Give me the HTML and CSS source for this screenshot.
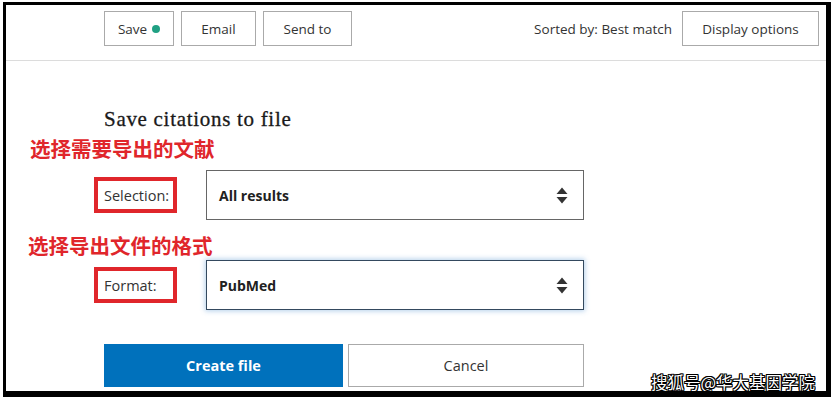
FILE: index.html
```html
<!DOCTYPE html>
<html lang="zh-CN">
<head>
    <meta charset="UTF-8">
    <meta name="viewport" content="width=device-width, initial-scale=1.0">
    <title>Save citations to file</title>
    <link rel="stylesheet" href="styles.css">
</head>
<body>
    <div class="frame">
        <div class="toolbar">
            <div class="actions-left">
                <button class="tool-btn">Save <span class="dot"></span></button>
                <button class="tool-btn email">Email</button>
                <button class="tool-btn send">Send to</button>
            </div>
            <div class="actions-right">
                <span class="sorted">Sorted by: Best match</span>
                <button class="tool-btn display">Display options</button>
            </div>
        </div>

        <div class="dialog">
            <h2 class="title">Save citations to file</h2>
            <div class="note">选择需要导出的文献</div>
            <div class="field">
                <label class="field-label">Selection:</label>
                <div class="select">
                    <span>All results</span>
                    <svg class="arrows" width="12" height="17" viewBox="0 0 12 17">
                        <path d="M6 0.5 L11.5 7 H0.5 Z" fill="#333"/>
                        <path d="M6 16.5 L11.5 10 H0.5 Z" fill="#333"/>
                    </svg>
                </div>
            </div>
            <div class="note note-second">选择导出文件的格式</div>
            <div class="field field-second">
                <label class="field-label">Format:</label>
                <div class="select focused">
                    <span>PubMed</span>
                    <svg class="arrows" width="12" height="17" viewBox="0 0 12 17">
                        <path d="M6 0.5 L11.5 7 H0.5 Z" fill="#333"/>
                        <path d="M6 16.5 L11.5 10 H0.5 Z" fill="#333"/>
                    </svg>
                </div>
            </div>
            <div class="buttons">
                <button class="create">Create file</button>
                <button class="cancel">Cancel</button>
            </div>
        </div>

        <div class="watermark">搜狐号@华大基因学院</div>
    </div>
</body>
</html>
```

FILE: styles.css
```css
body {
    margin: 0;
    padding: 0;
    background-color: #fff;
    font-family: "Open Sans", "Noto Sans", Arial, sans-serif;
    color: #333;
}
.frame {
    position: relative;
    margin: 2px 0 0 3px;
    width: 820px;
    height: 386px;
    border-top: 3px solid #000;
    border-left: 3px solid #000;
    border-right: 5px solid #000;
    border-bottom: 6px solid #000;
    overflow: hidden;
}
.toolbar {
    display: flex;
    justify-content: space-between;
    align-items: flex-start;
    height: 56px;
    padding: 6px 7px 0 98px;
    box-sizing: border-box;
    border-bottom: 1px solid #dcdcdc;
}
.actions-left, .actions-right {
    display: flex;
    align-items: center;
    gap: 7px;
}
.actions-right {
    gap: 10px;
}
.tool-btn {
    height: 35px;
    width: 70px;
    border: 1px solid #aaa;
    background: #fff;
    color: #333;
    font-family: "Open Sans", "Noto Sans", Arial, sans-serif;
    font-size: 13.5px;
    display: flex;
    align-items: center;
    justify-content: center;
    gap: 5px;
    padding: 0;
}
.tool-btn.email {
    width: 75px;
}
.tool-btn.send {
    width: 89px;
}
.tool-btn.display {
    width: 137px;
}
.dot {
    width: 8px;
    height: 8px;
    border-radius: 50%;
    background-color: #20a083;
    margin-top: 1px;
}
.sorted {
    font-size: 13.5px;
    color: #333;
}
.dialog {
    padding-left: 22px;
}
.title {
    margin: 45px 0 0 76px;
    font-family: "Liberation Serif", serif;
    font-size: 21px;
    line-height: 26px;
    font-weight: normal;
    letter-spacing: 0.7px;
    color: #1a1a1a;
    -webkit-text-stroke: 0.3px #1a1a1a;
}
.note {
    margin-top: 4px;
    margin-left: 2px;
    font-family: "Noto Sans CJK SC", sans-serif;
    font-weight: bold;
    font-size: 20.5px;
    line-height: 24px;
    color: #e0262b;
}
.note-second {
    margin-top: 13px;
    margin-left: 0;
}
.field {
    display: flex;
    align-items: center;
    margin-top: 10px;
}
.field-second {
    margin-top: 3px;
}
.field-label {
    box-sizing: border-box;
    width: 83px;
    height: 36px;
    margin-left: 66px;
    margin-right: 29px;
    padding-left: 6px;
    border: 4px solid #e0262b;
    display: flex;
    align-items: center;
    font-size: 14.5px;
    color: #333;
}
.select {
    box-sizing: border-box;
    width: 378px;
    height: 50px;
    border: 1px solid #666;
    display: flex;
    align-items: center;
    justify-content: space-between;
    padding: 0 15px 0 12px;
    font-size: 14px;
    font-weight: bold;
    color: #212121;
}
.select.focused {
    border-color: #34495e;
    box-shadow: 0 0 5px 1px rgba(90, 150, 210, 0.45);
}
.buttons {
    display: flex;
    gap: 5px;
    margin: 34px 0 0 76px;
}
.buttons button {
    height: 43px;
    font-family: "Open Sans", "Noto Sans", Arial, sans-serif;
    font-size: 14.5px;
}
.create {
    width: 239px;
    border: none;
    background-color: #0071bc;
    color: #fff;
    font-weight: bold;
}
.cancel {
    width: 236px;
    border: 1px solid #aaa;
    background: #fff;
    color: #333;
}
.watermark {
    position: absolute;
    right: 11px;
    bottom: -3px;
    font-family: "Noto Sans CJK SC", sans-serif;
    font-size: 16.5px;
    line-height: 24px;
    color: #fff;
    text-shadow: 1px 0 0 #000, -1px 0 0 #000, 0 1px 0 #000, 0 -1px 0 #000, 1px 1px 0 #000, -1px -1px 0 #000, 1px -1px 0 #000, -1px 1px 0 #000;
}
```
